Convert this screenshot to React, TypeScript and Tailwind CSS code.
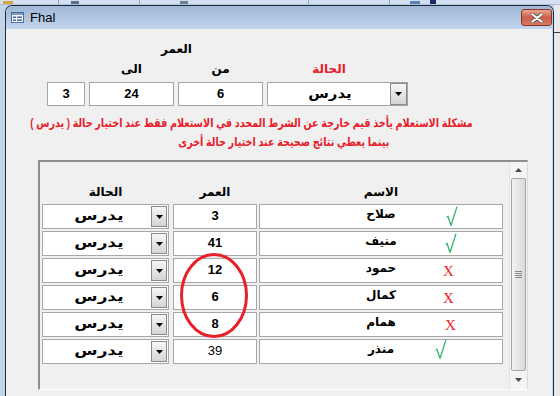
import React from 'react';

type Row = {
  status: string;
  age: string;
  name: string;
  mark: 'ok' | 'x';
  markClass: string;
  light?: boolean;
};

const rows: Row[] = [
  { status: 'يدرس', age: '3', name: 'صلاح', mark: 'ok', markClass: 'ml-[186px] mt-[1px]' },
  { status: 'يدرس', age: '41', name: 'منيف', mark: 'ok', markClass: 'ml-[185px] mt-[1px]' },
  { status: 'يدرس', age: '12', name: 'حمود', mark: 'x', markClass: 'ml-[183px] mt-[6px]' },
  { status: 'يدرس', age: '6', name: 'كمال', mark: 'x', markClass: 'ml-[183px] mt-[6px]' },
  { status: 'يدرس', age: '8', name: 'همام', mark: 'x', markClass: 'ml-[185px] mt-[6px]' },
  { status: 'يدرس', age: '39', name: 'منذر', mark: 'ok', markClass: 'ml-[175px] -mt-[1px]', light: true },
];

// small black triangle button used by the combo boxes
function DropButton({ className = '' }: { className?: string }) {
  return (
    <div
      className={`shrink-0 flex items-center justify-center border border-[#8a8a8a] bg-linear-to-b from-[#f6f6f6] to-[#d5d5d5] ${className}`}
    >
      <svg width="7" height="4" viewBox="0 0 7 4">
        <path d="M0 0h7L3.5 4z" fill="#000" />
      </svg>
    </div>
  );
}

function Tick() {
  return (
    <svg width="12" height="20" viewBox="0 0 12 20">
      <path d="M0.6 11.2 L2 10.4 L5 19.4 L11 0.6" fill="none" stroke="#2cb46a" strokeWidth="1.3" />
    </svg>
  );
}

function TitleIcon() {
  return (
    <svg width="13" height="11" viewBox="0 0 13 11">
      <rect x="0.5" y="0.5" width="12" height="10" fill="#f4f7fb" stroke="#4c6c94" />
      <rect x="1" y="1" width="11" height="2" fill="#7e9cc2" />
      <rect x="2" y="4.5" width="3" height="1.5" fill="#4c6c94" />
      <rect x="6" y="4.5" width="5" height="1.5" fill="#4c6c94" />
      <rect x="2" y="7.5" width="3" height="1.5" fill="#4c6c94" />
      <rect x="6" y="7.5" width="5" height="1.5" fill="#4c6c94" />
    </svg>
  );
}

function CloseButton() {
  return (
    <div className="w-[31px] h-[17px] rounded-[3px] border border-[#8b3024] bg-linear-to-b from-[#e7a595] via-[#cd5b46] to-[#d77a64] flex items-center justify-center">
      <svg width="12" height="10" viewBox="0 0 12 10">
        <path d="M1.5 1.5 L10.5 8.5 M10.5 1.5 L1.5 8.5" stroke="#5a5a5a" strokeWidth="3.6" strokeLinecap="round" />
        <path d="M1.5 1.5 L10.5 8.5 M10.5 1.5 L1.5 8.5" stroke="#fff" strokeWidth="2.2" strokeLinecap="round" />
      </svg>
    </div>
  );
}

export default function App() {
  return (
    <div className="relative w-[560px] h-[396px] overflow-hidden bg-[#c7d6ea] font-['Liberation_Sans','DejaVu_Sans',sans-serif] text-black">
      {/* toolbar strip of the host app, mostly hidden */}
      <div className="h-[5px] bg-[#d3e0f1] flex items-end border-b border-[#aebfd6]">
        <div className="ml-[3px] w-[10px] h-[3px] bg-[#d9a441]" />
        <div className="ml-[45px] w-px h-[4px] bg-[#8ea3c0]" />
        <div className="ml-[12px] w-[8px] h-[3px] bg-[#5a6f8c]" />
        <div className="ml-[60px] w-px h-[4px] bg-[#8ea3c0]" />
        <div className="ml-[40px] w-[8px] h-[3px] bg-[#6f7f95]" />
        <div className="ml-[120px] w-px h-[4px] bg-[#8ea3c0]" />
        <div className="ml-[80px] w-px h-[4px] bg-[#8ea3c0]" />
        <div className="ml-[20px] w-[10px] h-[3px] bg-[#5b82b8]" />
        <div className="ml-[10px] w-[6px] h-[4px] bg-[#1b2d66]" />
      </div>

      <div className="flex">
        <div className="w-[5px] h-[391px] bg-[#c3d3e8]" />

        {/* window */}
        <div className="w-[549px] h-[391px] border border-b-0 border-[#1f2c3c] rounded-t-[7px] overflow-hidden flex flex-col">
          <div className="h-[23px] bg-linear-to-b from-[#9fb7d6] to-[#c2d6ee] flex items-center pl-[5px] pr-[1px]">
            <TitleIcon />
            <span className="ml-[6px] text-[13px] leading-[15px]">Fhal</span>
            <div className="flex-1" />
            <CloseButton />
          </div>

          <div className="flex-1 bg-[#f0f0f0] border-r border-[#c2d6ee]">
            {/* filter area */}
            <div className="flex flex-col">
              <div className="ml-[83px] w-[175px] mt-[13px] h-[14px] text-center text-[12px] leading-[14px] font-bold">العمر</div>

              <div className="flex ml-[41px] mt-[6px] h-[14px] text-[12px] leading-[14px] font-bold">
                <div className="w-[38px]" />
                <div className="ml-[4px] w-[85px] text-center">الى</div>
                <div className="ml-[4px] w-[85px] text-center">من</div>
                <div className="ml-[4px] w-[124px] text-center text-[#e8202c]">الحالة</div>
              </div>

              <div className="flex ml-[41px] mt-[6px] h-[24px] text-[13px] font-bold">
                <div className="w-[38px] border border-[#a5a5a5] bg-white flex items-center justify-center">3</div>
                <div className="ml-[4px] w-[85px] border border-[#a5a5a5] bg-white flex items-center justify-center">24</div>
                <div className="ml-[4px] w-[85px] border border-[#a5a5a5] bg-white flex items-center justify-center">6</div>
                <div className="ml-[4px] w-[141px] border border-[#a5a5a5] bg-white flex">
                  <div className="flex-1 flex items-center justify-center pl-[2px]">
                    <span dir="rtl" className="inline-block scale-x-[1.15]">يدرس</span>
                  </div>
                  <DropButton className="w-[17px] border-[#6f6f6f]" />
                </div>
              </div>

              <div className="mt-[8px] w-[492px] h-[19px] flex justify-center text-[12px] leading-[19px] font-bold text-[#e8202c] whitespace-nowrap">
                <span dir="rtl" className="inline-block scale-x-[0.8]">
                  مشكلة الاستعلام يأخذ قيم خارجة عن الشرط المحدد في الاستعلام  فقط عند اختيار حالة ( يدرس )
                </span>
              </div>
              <div className="ml-[60px] w-[436px] h-[19px] flex justify-center text-[12px] leading-[19px] font-bold text-[#e8202c] whitespace-nowrap">
                <span dir="rtl" className="inline-block scale-x-[0.8]">
                  بينما يعطي نتائج صحيحة عند اختيار حالة أخرى
                </span>
              </div>
            </div>

            {/* subform */}
            <div className="ml-[32px] mt-[8px] w-[490px] h-[230px] border-t-2 border-l-2 border-[#8f8f8f] border-b border-r border-b-white border-r-[#dcdcdc] flex">
              <div className="flex-1 flex flex-col">
                <div className="flex mt-[23px] h-[14px] text-[12px] leading-[14px] font-bold">
                  <div className="ml-[2px] w-[127px] text-center">الحالة</div>
                  <div className="ml-[4px] w-[84px] text-center">العمر</div>
                  <div className="ml-[2px] w-[244px] text-center">الاسم</div>
                </div>

                <div className="mt-[5px] flex flex-col gap-[2px]">
                  {rows.map((r, i) => (
                    <div key={i} className="flex h-[25px] text-[12px] font-bold">
                      <div className="shrink-0 ml-[2px] w-[127px] border border-[#a8a8a8] bg-white flex">
                        <div className="flex-1 flex items-center justify-center pb-[1px] pl-[4px] text-[13px]">
                          <span dir="rtl" className="inline-block scale-x-[1.3]">{r.status}</span>
                        </div>
                        <DropButton className="w-[16px] my-[1px] mr-[1px]" />
                      </div>
                      <div
                        className={`shrink-0 ml-[4px] w-[84px] border border-[#a8a8a8] bg-white flex justify-center pt-[3px] text-[13px] leading-[15px] ${r.light ? 'font-normal' : ''}`}
                      >
                        {r.age}
                      </div>
                      <div className="shrink-0 ml-[2px] w-[244px] border border-[#a8a8a8] bg-white grid">
                        <div className="col-start-1 row-start-1 text-center pt-[2px] leading-[15px]">
                          <span dir="rtl">{r.name}</span>
                        </div>
                        <div className={`col-start-1 row-start-1 justify-self-start self-start ${r.markClass}`}>
                          {r.mark === 'ok' ? (
                            <Tick />
                          ) : (
                            <span className="block font-['Liberation_Serif',serif] font-normal text-[15px] leading-[12px] text-[#ec1c24]">X</span>
                          )}
                        </div>
                      </div>
                    </div>
                  ))}
                </div>
              </div>

              {/* scrollbar */}
              <div className="w-[17px] mr-[1px] bg-[#f4f4f4] border-l border-[#e2e2e2] flex flex-col items-center">
                <div className="h-[16px] flex items-center justify-center">
                  <svg width="7" height="4" viewBox="0 0 7 4">
                    <path d="M0 4h7L3.5 0z" fill="#4a4a4a" />
                  </svg>
                </div>
                <div className="w-[15px] flex-1 rounded-[2px] border border-[#a6a6a6] bg-linear-to-r from-[#f2f2f2] to-[#d9d9d9] flex items-center justify-center">
                  <div className="flex flex-col gap-[1px]">
                    <div className="w-[7px] h-px bg-[#8a8a8a]" />
                    <div className="w-[7px] h-px bg-[#8a8a8a]" />
                    <div className="w-[7px] h-px bg-[#8a8a8a]" />
                    <div className="w-[7px] h-px bg-[#8a8a8a]" />
                  </div>
                </div>
                <div className="h-[18px] flex items-center justify-center">
                  <svg width="7" height="4" viewBox="0 0 7 4">
                    <path d="M0 0h7L3.5 4z" fill="#4a4a4a" />
                  </svg>
                </div>
              </div>
            </div>
          </div>
        </div>

        <div className="w-[6px] h-[391px] bg-[#e9e9e9] flex flex-col">
          <div className="mt-[27px] h-px bg-[#3a3a3a]" />
        </div>
      </div>

      {/* red annotation ellipse over the age column */}
      <svg className="absolute left-[179px] top-[252px]" width="70" height="87" viewBox="0 0 70 87">
        <ellipse cx="35" cy="43.5" rx="32.5" ry="41" fill="none" stroke="#e8202a" strokeWidth="3" />
      </svg>
    </div>
  );
}
